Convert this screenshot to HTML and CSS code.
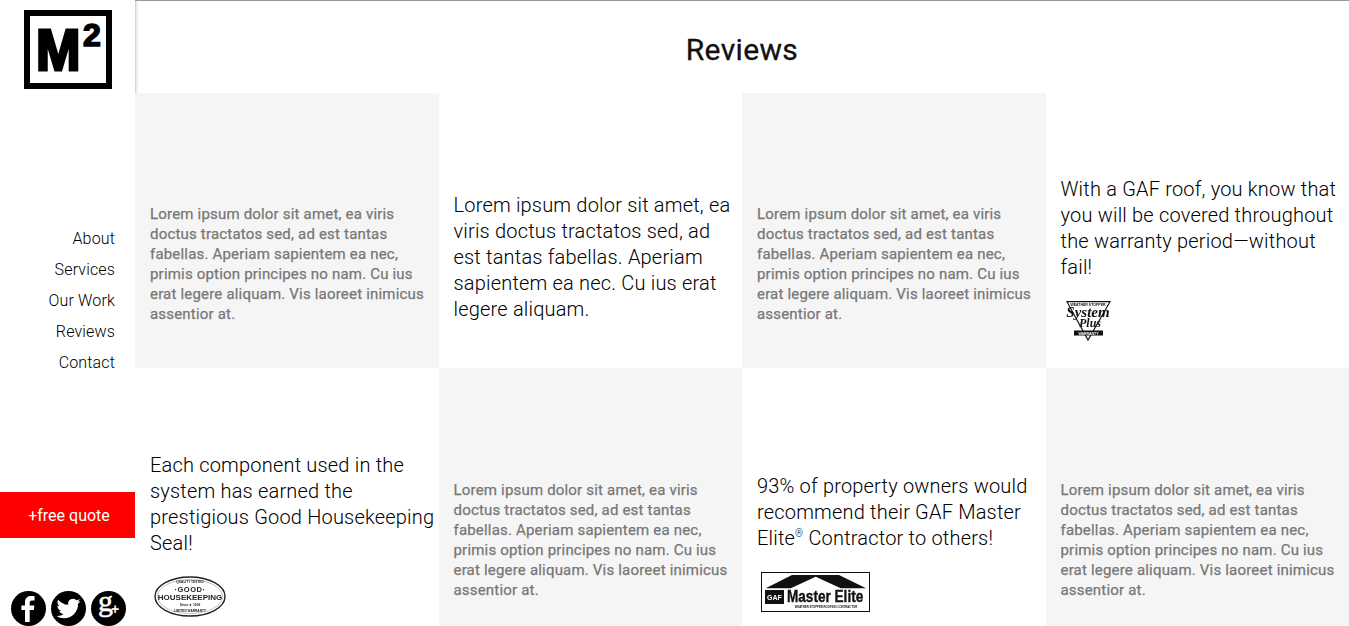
FILE: index.html
```html
<!DOCTYPE html>
<html lang="en">
<head>
<meta charset="utf-8">
<title>Reviews</title>
<link rel="stylesheet" href="styles.css">
</head>
<body>
<div class="page">
  <aside class="sidebar">
    <a class="logo" href="#"><span class="logo-m">M</span><span class="logo-two">2</span></a>
    <nav class="nav">
      <a href="#">About</a>
      <a href="#">Services</a>
      <a href="#">Our Work</a>
      <a href="#">Reviews</a>
      <a href="#">Contact</a>
    </nav>
    <a class="quote" href="#">+free quote</a>
    <div class="social">
      <svg viewBox="0 0 35 35" width="35" height="35" aria-label="Facebook"><circle cx="17.5" cy="17.5" r="17.5"/><path fill="#fff" d="M14 31V19h-3.6v-4.6H14v-3.2C14 7.4 16.3 5 20 5c1.700 0 3 .1 3.600.2v4.300h-2.500c-2 0-2.400 1-2.400 2.300v2.600h4.700l-.6 4.600h-4.100v12z"/></svg>
      <svg viewBox="0 0 35 35" width="35" height="35" aria-label="Twitter"><circle cx="17.500" cy="17.500" r="17.500"/><g transform="translate(5.500 5.500)"><path fill="#fff" d="M23.953 4.570a10 10 0 01-2.825.775 4.958 4.958 0 002.163-2.723c-.951.555-2.005.959-3.127 1.184a4.920 4.920 0 00-8.384 4.482C7.690 8.095 4.067 6.130 1.640 3.162a4.822 4.822 0 00-.666 2.475c0 1.710.870 3.213 2.188 4.096a4.904 4.904 0 01-2.228-.616v.060a4.923 4.923 0 003.946 4.827 4.996 4.996 0 01-2.212.085 4.936 4.936 0 004.604 3.417 9.867 9.867 0 01-6.102 2.105c-.390 0-.779-.023-1.170-.067a13.995 13.995 0 007.557 2.209c9.053 0 13.998-7.496 13.998-13.985 0-.210 0-.420-.015-.630A9.935 9.935 0 0024 4.590z"/></g></svg>
      <svg viewBox="0 0 35 35" width="35" height="35" aria-label="Google Plus"><circle cx="17.500" cy="17.500" r="17.500"/><text class="gplus-g" x="7" y="20">g</text><text class="gplus-plus" x="20" y="22.500">+</text></svg>
    </div>
  </aside>
  <main class="main">
    <header class="header"><h1>Reviews</h1></header>
    <section class="grid">
      <article class="cell shade high"><p class="small">Lorem ipsum dolor sit amet, ea viris doctus tractatos sed, ad est tantas fabellas. Aperiam sapientem ea nec, primis option principes no nam. Cu ius erat legere aliquam. Vis laoreet inimicus assentior at.</p></article>
      <article class="cell"><p class="big">Lorem ipsum dolor sit amet, ea viris doctus tractatos sed, ad est tantas fabellas. Aperiam sapientem ea nec. Cu ius erat legere aliquam.</p></article>
      <article class="cell shade high"><p class="small">Lorem ipsum dolor sit amet, ea viris doctus tractatos sed, ad est tantas fabellas. Aperiam sapientem ea nec, primis option principes no nam. Cu ius erat legere aliquam. Vis laoreet inimicus assentior at.</p></article>
      <article class="cell"><p class="big">With a GAF roof, you know that you will be covered throughout the warranty period—without fail!</p>
        <svg class="badge badge-system" viewBox="0 0 46 40" width="46" height="40" aria-label="System Plus">
          <path d="M1 1.700H44L22 40Z" fill="#fff" stroke="#111" stroke-width="1.200"/>
          <text class="sp-top" x="22" y="6">WEATHER STOPPER</text>
          <text class="sp-main" x="22" y="17">System</text>
          <text class="sp-plus" x="24" y="27">Plus</text>
          <rect x="8" y="30.500" width="29" height="5" fill="#111"/>
          <text class="sp-band" x="22.500" y="34.500">WARRANTY</text>
        </svg>
      </article>
      <article class="cell"><p class="big">Each component used in the system has earned the prestigious Good Housekeeping Seal!</p>
        <svg class="badge badge-good" viewBox="0 0 72 41" width="72" height="41" aria-label="Good Housekeeping">
          <ellipse cx="36" cy="20.500" rx="35" ry="19.500" fill="#fff" stroke="#222" stroke-width="1.400"/>
          <ellipse cx="36" cy="20.500" rx="32.500" ry="17" fill="none" stroke="#888" stroke-width=".5"/>
          <text class="gh-tiny" x="36" y="6.500">QUALITY TESTED</text>
          <text class="gh-good" x="36" y="16">·GOOD·</text>
          <text class="gh-house" x="36" y="23.500">HOUSEKEEPING</text>
          <text class="gh-tiny" x="36" y="30">Since ★ 1909</text>
          <text class="gh-tiny" x="36" y="35.500">LIMITED WARRANTY</text>
        </svg>
      </article>
      <article class="cell shade"><p class="small">Lorem ipsum dolor sit amet, ea viris doctus tractatos sed, ad est tantas fabellas. Aperiam sapientem ea nec, primis option principes no nam. Cu ius erat legere aliquam. Vis laoreet inimicus assentior at.</p></article>
      <article class="cell"><p class="big">93% of property owners would recommend their GAF Master Elite<sup>®</sup> Contractor to others!</p>
        <svg class="badge badge-gaf" viewBox="0 0 110 41" width="110" height="41" aria-label="GAF Master Elite">
          <rect x=".5" y=".5" width="108" height="39" fill="#fff" stroke="#111"/>
          <path d="M4.700 16.300 31 3H78L105 16.300H79.700L54.700 4.700 29.700 16.300Z" fill="#111"/>
          <rect x="4" y="18" width="19" height="14" fill="#111"/>
          <text class="gaf-mark" x="13.500" y="27.500">GAF</text>
          <text class="gaf-name" transform="translate(26 30) scale(.8 1)">Master Elite</text>
          <text class="gaf-sub" x="65" y="35.500">WEATHER STOPPER ROOFING CONTRACTOR</text>
        </svg>
      </article>
      <article class="cell shade"><p class="small">Lorem ipsum dolor sit amet, ea viris doctus tractatos sed, ad est tantas fabellas. Aperiam sapientem ea nec, primis option principes no nam. Cu ius erat legere aliquam. Vis laoreet inimicus assentior at.</p></article>
    </section>
  </main>
</div>
</body>
</html>
```
FILE: styles.css
```css
* { box-sizing: border-box; }
html, body { margin: 0; height: 626px; overflow: hidden; background: #fff; }
body { font-family: Roboto, "Liberation Sans", sans-serif; color: #111; }
a { color: inherit; text-decoration: none; }

.page { display: flex; width: 1349px; height: 626px; overflow: hidden; }

.sidebar { width: 135px; flex: none; display: flex; flex-direction: column; }
.logo {
  display: flex; align-items: flex-start; justify-content: flex-start;
  width: 88px; height: 80px; margin: 10px 0 0 24px; padding-left: 6px;
  border: 6px solid #000; background: #fff; color: #000;
  font-family: "Liberation Sans", sans-serif; font-weight: 700;
}
.logo-m { display: block; width: 47px; font-size: 58px; line-height: 42px; margin-top: 13px; -webkit-text-stroke: 3px #000; transform: scaleX(.92); transform-origin: left; }
.logo-two { display: block; font-size: 32px; line-height: 24px; margin-top: 7px; -webkit-text-stroke: 1.600px #000; }

.nav { display: flex; flex-direction: column; align-items: flex-end; margin-top: 134px; padding-right: 20px; font-size: 16px; font-weight: 300; letter-spacing: .15px; line-height: 31px; color: #000; }

.quote { display: flex; align-items: center; justify-content: center; height: 46px; margin-top: 114px; padding-left: 3px; background: #f00; color: #fff; font-size: 16px; }

.social { display: flex; gap: 5px; margin-top: 53px; padding-left: 11px; }
.social svg { flex: none; fill: #000; overflow: visible; }
.gplus-g { font-family: "Liberation Serif", serif; font-size: 30px; fill: #fff; stroke: #fff; stroke-width: .5px; }
.gplus-plus { font-family: "Liberation Sans", sans-serif; font-size: 14px; font-weight: 700; fill: #fff; }

.main { flex: 1; min-width: 0; border-top: 1px solid #999; }
.header { height: 92px; display: flex; align-items: center; justify-content: center; box-shadow: inset 4px 0 3px -3px rgba(0,0,0,.25); }
.header h1 { margin: 6px 0 0; font-size: 30px; font-weight: 400; letter-spacing: .35px; line-height: 34px; color: #111; -webkit-text-stroke: .3px #111; }

.grid { display: grid; grid-template-columns: repeat(4, 1fr); grid-auto-rows: 275px; }
.cell { display: flex; flex-direction: column; justify-content: center; padding: 68px 3px 0 15px; background: #fff; }
.shade { background: #f5f5f5; }
.high { padding-top: 66px; }
.small { margin: 0; font-size: 15px; line-height: 20px; font-weight: 400; letter-spacing: .19px; color: #777; -webkit-text-stroke: .25px #777; }
.big { margin: 0 0 14px; font-size: 20px; line-height: 26px; font-weight: 300; letter-spacing: .19px; color: #000; }
.big:last-child { margin-bottom: 16px; }
.big sup { font-size: 10px; line-height: 0; }

.badge { display: block; flex: none; overflow: visible; filter: blur(.3px); }
.badge-system { margin: 6px 0 13px 5px; }
.badge-good { margin: 6px 0 10px 4px; }
.badge-gaf { margin: 7px 0 -6px 4px; }

.sp-top, .sp-main, .sp-plus, .sp-band, .gh-tiny, .gh-good, .gh-house, .gaf-mark, .gaf-sub { text-anchor: middle; }
.sp-top { font: 700 3.500px "Liberation Sans", sans-serif; fill: #111; }
.sp-main { font: italic 700 15px "Liberation Serif", serif; fill: #111; }
.sp-plus { font: italic 700 12px "Liberation Serif", serif; fill: #111; }
.sp-band { font: 700 3.500px "Liberation Sans", sans-serif; fill: #fff; }
.gh-tiny { font: 700 3.200px "Liberation Sans", sans-serif; fill: #222; }
.gh-good { font: 700 7.500px "Liberation Sans", sans-serif; letter-spacing: .5px; fill: #222; }
.gh-house { font: 700 8px "Liberation Sans", sans-serif; fill: #222; }
.gaf-mark { font: 700 7px "Liberation Sans", sans-serif; fill: #fff; }
.gaf-name { font: 700 17px "Liberation Sans", sans-serif; fill: #111; stroke: #111; stroke-width: .4px; }
.gaf-sub { font: 700 2.800px "Liberation Sans", sans-serif; fill: #111; }
```
